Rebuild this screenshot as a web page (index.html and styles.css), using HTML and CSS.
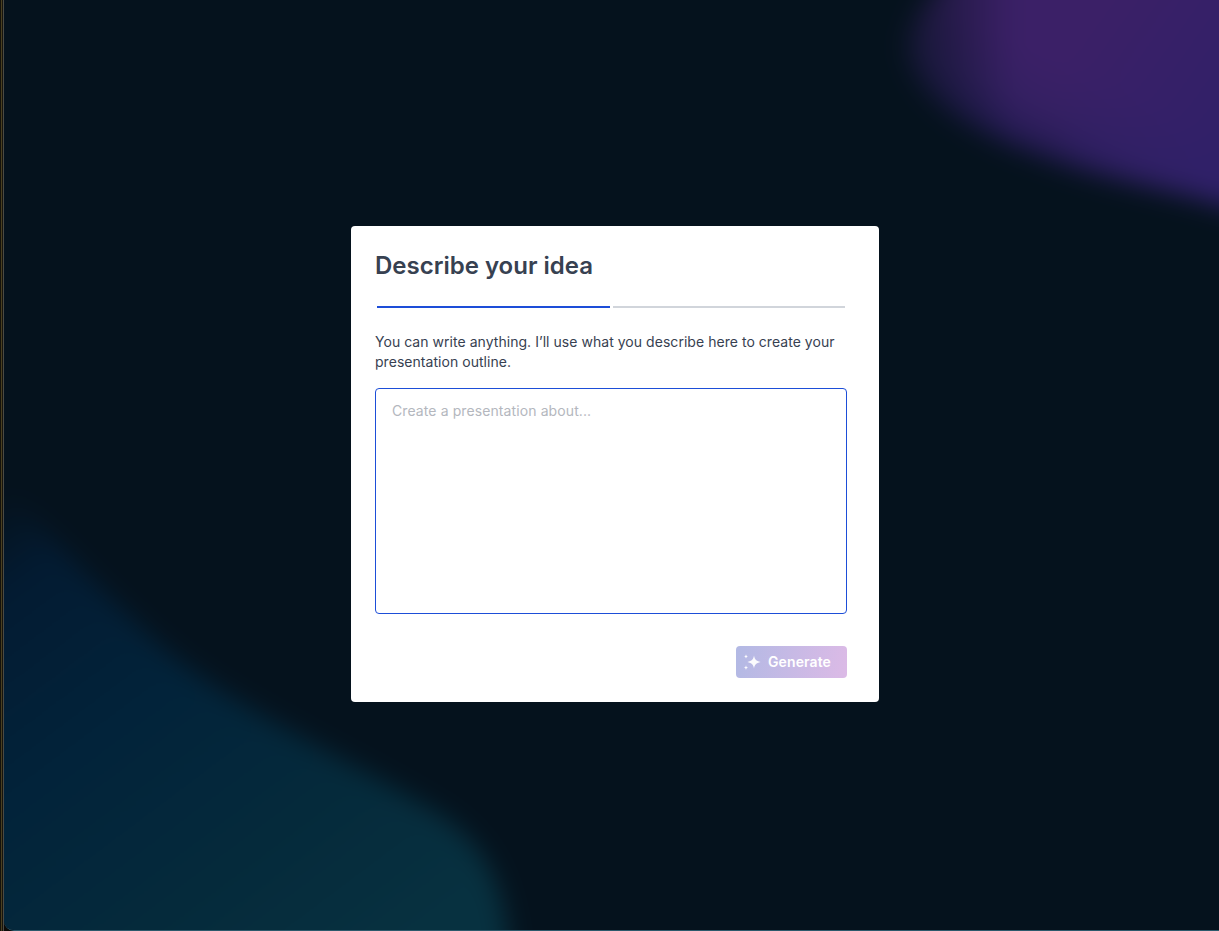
FILE: index.html
```html
<!DOCTYPE html>
<html lang="en">
<head>
<meta charset="utf-8">
<title>Describe your idea</title>
<link rel="stylesheet" href="styles.css">
</head>
<body>
<div class="edge"></div>
<main class="stage">
  <svg class="glow" viewBox="0 0 1215 931" preserveAspectRatio="none" aria-hidden="true">
    <defs>
      <filter id="soften" filterUnits="userSpaceOnUse" x="-150" y="-150" width="1515" height="1231" color-interpolation-filters="sRGB"><feGaussianBlur stdDeviation="13"/></filter>
      <linearGradient id="violet" gradientUnits="userSpaceOnUse" x1="1060" y1="70" x2="1010" y2="180">
        <stop offset="0" stop-color="#3b2067"/>
        <stop offset="0.4" stop-color="#342062"/>
        <stop offset="0.7" stop-color="#221a50"/>
        <stop offset="1" stop-color="#0e1533"/>
      </linearGradient>
      <linearGradient id="violet-blue" gradientUnits="userSpaceOnUse" x1="1060" y1="60" x2="1215" y2="170">
        <stop offset="0" stop-color="#2e2069" stop-opacity="0"/>
        <stop offset="1" stop-color="#2e2069" stop-opacity="0.85"/>
      </linearGradient>
      <linearGradient id="violet-fade" gradientUnits="userSpaceOnUse" x1="890" y1="0" x2="1010" y2="0">
        <stop offset="0" stop-color="#05121d" stop-opacity="0.75"/>
        <stop offset="1" stop-color="#05121d" stop-opacity="0"/>
      </linearGradient>
      <linearGradient id="teal" gradientUnits="userSpaceOnUse" x1="20" y1="480" x2="380" y2="960">
        <stop offset="0" stop-color="#05121d"/>
        <stop offset="0.13" stop-color="#031b32"/>
        <stop offset="0.42" stop-color="#02233a"/>
        <stop offset="0.72" stop-color="#052a3b"/>
        <stop offset="1" stop-color="#073140"/>
      </linearGradient>
    </defs>
    <g filter="url(#soften)">
      <rect x="-300" y="-300" width="1815" height="1531" fill="#05121d"/>
      <path fill="url(#violet)" d="M965 -50 C930 -5 893 25 907 65 C925 115 1000 145 1070 168 C1120 184 1170 190 1240 212 L1280 -50 Z"/>
      <path fill="url(#violet-blue)" d="M1060 -50 L1060 155 C1120 180 1170 190 1240 212 L1280 -50 Z"/>
      <rect x="860" y="-60" width="150" height="260" fill="url(#violet-fade)"/>
      <path fill="url(#teal)" d="M-60 425 C0 480 60 555 130 620 C200 695 320 745 420 805 C475 835 510 880 505 990 L-60 990 Z"/>
    </g>
  </svg>
  <section class="dialog">
    <h1 class="title">Describe your idea</h1>
    <div class="steps">
      <span class="step active"></span>
      <span class="step"></span>
    </div>
    <p class="lead">You can write anything. I’ll use what you describe here to create your presentation outline.</p>
    <div class="field"><span class="placeholder">Create a presentation about...</span></div>
    <div class="actions">
      <button class="generate" type="button">
        <svg class="spark" viewBox="0 0 20 20" aria-hidden="true">
          <path d="M12 3.6 C12.7 7.3 14 9 18.6 10 C14 11 12.7 12.7 12 16.4 C11.3 12.7 10 11 5.4 10 C10 9 11.3 7.3 12 3.6 Z"/>
          <path d="M4 2.2 C4.3 3.6 4.7 4 6 4.4 C4.7 4.8 4.3 5.2 4 6.6 C3.7 5.2 3.3 4.8 2 4.4 C3.3 4 3.7 3.6 4 2.2 Z"/>
          <path d="M4 13.2 C4.3 14.8 4.8 15.2 6.2 15.6 C4.8 16 4.3 16.5 4 18 C3.7 16.5 3.2 16 1.8 15.6 C3.2 15.2 3.7 14.8 4 13.2 Z"/>
        </svg>
        <span>Generate</span>
      </button>
    </div>
  </section>
</main>
</body>
</html>
```

FILE: styles.css
```css
* { box-sizing: border-box; }

html, body {
  height: 100%;
  margin: 0;
}

body {
  display: flex;
  height: 931px;
  overflow: hidden;
  background: #0b0a08;
  font-family: Inter, "Liberation Sans", sans-serif;
}

.edge {
  flex: 0 0 4px;
  background: linear-gradient(90deg, #14120c 0 1px, #4a4020 1px 2px, #16140e 2px 3px, #4a4a44 3px 4px);
}

.stage {
  position: relative;
  flex: 1;
  display: flex;
  justify-content: center;
  align-items: flex-start;
  padding: 226px 0 0 7px;
  height: 931px;
  overflow: hidden;
  background: #05121d;
  border-bottom-left-radius: 10px;
  border-bottom: 1px solid #2c5a6c;
}

.glow {
  position: absolute;
  top: 0;
  left: 0;
  width: 100%;
  height: 931px;
}

.dialog {
  position: relative;
  width: 528px;
  height: 476px;
  padding: 24px 32px 24px 24px;
  background: #fff;
  border-radius: 4px;
}

.title {
  margin: 0;
  font-size: 24px;
  font-weight: 600;
  line-height: 32px;
  color: #374151;
}

.steps {
  display: flex;
  gap: 3px;
  margin: 24px 2px 0;
}

.step {
  flex: 1;
  height: 2px;
  background: #d1d5db;
}

.step.active {
  background: #1d4ed8;
}

.lead {
  margin: 24px 0 0;
  font-size: 14px;
  line-height: 20px;
  letter-spacing: 0.04px;
  color: #374151;
}

.field {
  height: 226px;
  margin-top: 16px;
  padding: 11px 16px;
  border: 1px solid #1d4ed8;
  border-radius: 4px;
}

.placeholder {
  display: block;
  font-size: 14px;
  line-height: 21px;
  letter-spacing: 0.1px;
  color: #b4b7be;
}

.actions {
  display: flex;
  justify-content: flex-end;
  margin-top: 32px;
}

.generate {
  display: flex;
  align-items: center;
  gap: 6px;
  width: 111px;
  height: 32px;
  padding: 0 0 1px 6px;
  border: 0;
  border-radius: 4px;
  background: linear-gradient(100deg, #b2b9e4, #dcbae6);
  color: #fff;
  font-family: inherit;
  font-size: 14px;
  font-weight: 600;
  letter-spacing: 0.1px;
}

.spark {
  width: 20px;
  height: 20px;
  fill: #fff;
  opacity: 0.95;
}
```
